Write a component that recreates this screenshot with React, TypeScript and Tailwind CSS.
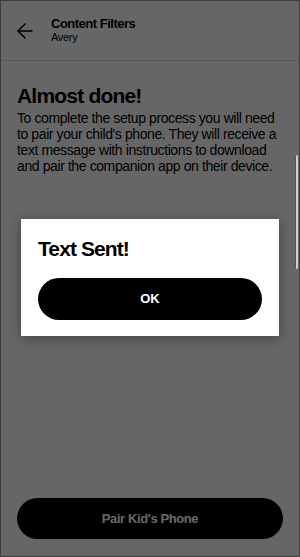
import { ArrowLeft } from "lucide-react";

export default function App() {
  return (
    <div
      className="relative h-[557px] w-[300px] overflow-hidden border border-[#3d3d3d] bg-white text-black"
      style={{ fontFamily: "'Liberation Sans', Arial, sans-serif" }}
    >
      <div className="flex h-full flex-col">
        <div className="flex h-[60px] items-center border-b border-[#e0e0e0] pl-[12px]">
          <ArrowLeft className="h-6 w-6" strokeWidth={1.5} />
          <div className="ml-[14px] -mt-[1px] flex flex-col">
            <span className="text-[13px] font-bold leading-[15px] tracking-[-0.5px]">Content Filters</span>
            <span className="text-[11px] leading-[13px] tracking-[-0.3px]">Avery</span>
          </div>
        </div>
        <div className="px-[16px] pt-[23px]">
          <h1 className="text-[21px] font-bold leading-[23px] tracking-[-0.8px]">Almost done!</h1>
          <p className="mt-[3px] text-[14px] leading-[16px] tracking-[-0.4px]">
            To complete the setup process you will need to pair your child's phone. They will receive a text message with instructions to download and pair the companion app on their device.
          </p>
        </div>
        <div className="mt-auto px-[16px] pb-[17px]">
          <button className="flex h-[41px] w-full items-center justify-center rounded-full bg-black text-[13px] font-bold tracking-[-0.4px] text-white">
            Pair Kid's Phone
          </button>
        </div>
      </div>

      <div className="absolute inset-0 bg-black/60" />

      <div className="absolute right-[1px] top-[154px] h-[114px] w-[3px] rounded-full border-l border-[#555] bg-[#d0d0d0]" />

      <div className="absolute left-[20px] top-[218px] w-[258px] bg-white px-[17px] pb-[16px] pt-[18px] shadow-[0_2px_12px_rgba(0,0,0,0.35)]">
        <h2 className="text-[21px] font-bold leading-[24px] tracking-[-0.9px]">Text Sent!</h2>
        <button className="mt-[17px] flex h-[42px] w-full items-center justify-center rounded-full bg-black text-[13px] font-bold text-white">
          OK
        </button>
      </div>
    </div>
  );
}
